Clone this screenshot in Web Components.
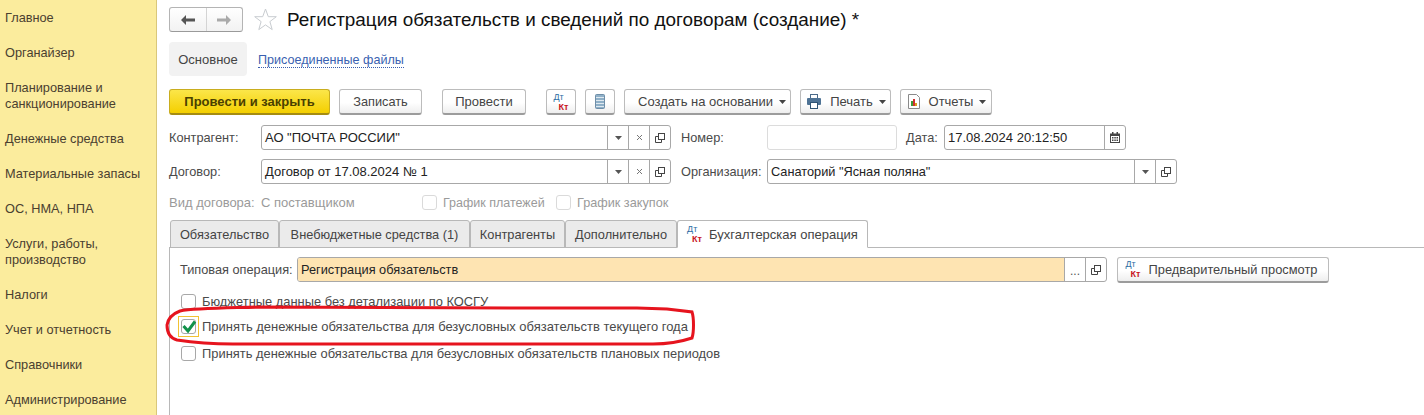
<!DOCTYPE html>
<html lang="ru">
<head>
<meta charset="utf-8">
<title>Регистрация обязательств</title>
<style>
  html, body { margin: 0; height: 415px; overflow: hidden; background: #fff; }
  body { display: flex; font: 13px "Liberation Sans", Arial, sans-serif; color: #333; }
</style>
</head>
<body>
<template id="dtkt">
  <style>
    :host { display: inline-block; position: relative; width: 15px; height: 16px; flex: none; }
    span { position: absolute; font: 9px "Liberation Sans", Arial, sans-serif; }
    .d { left: 0; top: -2px; color: #2d6da3; }
    .k { left: 5px; top: 8px; color: #c8141e; font-weight: bold; }
  </style>
  <span class="d">Дт</span><span class="k">Кт</span>
</template>

<app-sidebar>
  <side-item>Главное</side-item>
  <side-item>Органайзер</side-item>
  <side-item>Планирование и<br>санкционирование</side-item>
  <side-item>Денежные средства</side-item>
  <side-item>Материальные запасы</side-item>
  <side-item>ОС, НМА, НПА</side-item>
  <side-item>Услуги, работы,<br>производство</side-item>
  <side-item>Налоги</side-item>
  <side-item>Учет и отчетность</side-item>
  <side-item>Справочники</side-item>
  <side-item>Администрирование</side-item>
</app-sidebar>

<doc-form>
  <form-header title="Регистрация обязательств и сведений по договорам (создание) *"></form-header>
  <form-links></form-links>

  <form-row style="--top:13px;--h:26px">
    <ui-btn primary style="width:161px;margin-right:9px">Провести и закрыть</ui-btn>
    <ui-btn style="width:83px;margin-right:20px;font-size:12.75px">Записать</ui-btn>
    <ui-btn style="width:84px;margin-right:20px">Провести</ui-btn>
    <ui-btn style="width:30px;margin-right:9px"><dt-kt></dt-kt></ui-btn>
    <ui-btn style="width:30px;margin-right:9px">
      <svg width="10" height="15" viewBox="0 0 10 15"><rect x=".5" y=".5" width="9" height="14" rx="1" fill="#8fb0c8" stroke="#6f8ea8"/><path d="M1 3.500h8M1 6.500h8M1 9.500h8M1 12.500h8" stroke="#dfe9f0"/></svg>
    </ui-btn>
    <ui-btn caret style="width:167px;margin-right:9px;padding-left:9px">Создать на основании</ui-btn>
    <ui-btn caret style="width:91px;margin-right:9px">
      <svg slot="icon" width="14" height="15" viewBox="0 0 14 15"><rect x="3.500" y=".5" width="7" height="4" fill="#fff" stroke="#4a6a8a"/><rect x="0" y="4" width="14" height="7" rx="1" fill="#4f7395"/><rect x="3.500" y="8.500" width="7" height="6" fill="#fff" stroke="#2f5373"/></svg>
      Печать
    </ui-btn>
    <ui-btn caret style="width:92px">
      <svg slot="icon" width="12" height="15" viewBox="0 0 12 15"><path d="M.5.5h8l3 3v11H.5z" fill="#fff" stroke="#8a8a8a"/><rect x="3" y="7" width="2" height="5" fill="#3a9a3a"/><rect x="5" y="5" width="2" height="7" fill="#d03030"/><rect x="7" y="9" width="2" height="3" fill="#d8a020"/></svg>
      Отчеты
    </ui-btn>
  </form-row>

  <form-row style="--top:10px;--h:25px">
    <form-label style="width:92px">Контрагент:</form-label>
    <ui-field style="width:410px;margin-right:10px" buttons="drop clear open">АО "ПОЧТА РОССИИ"</ui-field>
    <form-label style="width:86px">Номер:</form-label>
    <ui-field style="width:130px;margin-right:9px" faint></ui-field>
    <form-label style="width:38px">Дата:</form-label>
    <ui-field style="width:182px" buttons="cal">17.08.2024 20:12:50</ui-field>
  </form-row>

  <form-row style="--top:9px;--h:25px">
    <form-label style="width:92px">Договор:</form-label>
    <ui-field style="width:410px;margin-right:10px" buttons="drop clear open">Договор от 17.08.2024 № 1</ui-field>
    <form-label style="width:86px">Организация:</form-label>
    <ui-field style="width:410px;font-size:12.75px" buttons="drop open">Санаторий "Ясная поляна"</ui-field>
  </form-row>

  <form-row style="--top:9px;--h:19px">
    <form-label muted style="width:92px;font-size:13px">Вид договора:</form-label>
    <form-label muted style="width:161px;font-size:13px">С поставщиком</form-label>
    <ui-check disabled style="width:134px;font-size:12.5px">График платежей</ui-check>
    <ui-check disabled style="font-size:12.7px">График закупок</ui-check>
  </form-row>

  <tab-strip>
    <ui-tab style="width:109px">Обязательство</ui-tab>
    <ui-tab style="width:191px">Внебюджетные средства (1)</ui-tab>
    <ui-tab style="width:95px">Контрагенты</ui-tab>
    <ui-tab style="width:112px">Дополнительно</ui-tab>
    <ui-tab active style="width:191px;font-size:13px;gap:7px"><dt-kt slot="icon"></dt-kt>Бухгалтерская операция</ui-tab>
  </tab-strip>

  <tab-panel>
    <form-row style="--top:0;--h:25px">
      <form-label style="width:117px">Типовая операция:</form-label>
      <ui-field style="width:810px;margin-right:10px;font-size:12.75px" buttons="dots open" tinted>Регистрация обязательств</ui-field>
      <ui-btn style="width:212px;font-size:12.85px;padding-right:3px"><dt-kt slot="icon"></dt-kt>Предварительный просмотр</ui-btn>
    </form-row>
    <ui-check style="margin:11px 0 0 1px;height:16px">Бюджетные данные без детализации по КОСГУ</ui-check>
    <ui-check checked style="margin:9px 0 0 1px;height:16px;font-size:12.97px">Принять денежные обязательства для безусловных обязательств текущего года</ui-check>
    <ui-check style="margin:11px 0 0 1px;height:16px">Принять денежные обязательства для безусловных обязательств плановых периодов</ui-check>
  </tab-panel>

  <svg width="540" height="50" viewBox="160 300 540 50" fill="none" style="position:absolute;left:3px;top:300px;pointer-events:none">
    <path d="M180 311C195 308 230 308 260 307L540 308L637 308L667 309L692 312C694 318 694 332 692 338C680 342 665 344 653 344L460 344L233 344C210 344 190 342 177 340C170 338 167 332 167 325C168 319 172 314 180 311Z" stroke="#e6141e" stroke-width="3"/>
  </svg>
</doc-form>

<script>
const ICONS = {
  drop: '<svg width="7" height="4" viewBox="0 0 7 4"><path d="M0 0h7L3.500 4z" fill="#555"/></svg>',
  clear: '<svg width="7" height="7" viewBox="0 0 7 7"><path d="M1 1l5 5M6 1L1 6" stroke="#777" fill="none"/></svg>',
  open: '<svg width="10" height="10" viewBox="0 0 10 10" fill="none" stroke="#444"><rect x="3.500" y=".5" width="6" height="6"/><path d="M3.500 3.500H.5v6h6V6.500"/></svg>',
  dots: '<span style="font:12px/12px \'Liberation Sans\',sans-serif;color:#555;margin-top:3px">...</span>',
  cal: '<svg width="10" height="11" viewBox="0 0 10 11"><path d="M0 1.500h10V11H0z" fill="#444"/><path d="M1 4h8v6H1z" fill="#fff"/><path d="M2 0h1.500v2.500H2zM6.500 0H8v2.500H6.500z" fill="#444"/><path d="M2 5h1.500v1.500H2zM4.300 5h1.500v1.500H4.300zM6.500 5H8v1.500H6.500zM2 7.500h1.500V9H2zM4.300 7.500h1.500V9H4.300zM6.500 7.500H8V9H6.500z" fill="#444"/></svg>'
};

// every element here is just markup + styles, so one helper is enough
function shadow(host, html) {
  host.attachShadow({ mode: 'open' }).innerHTML = html;
}

class AppSidebar extends HTMLElement {
  constructor() {
    super();
    shadow(this, `<style>
      :host { display: flex; flex-direction: column; flex: none; box-sizing: border-box; width: 157px; height: 415px;
        padding-top: 10px; gap: 19px; background: #fbec9d; border-right: 1px solid #d9c77a; overflow: hidden; }
    </style><slot></slot>`);
  }
}

class SideItem extends HTMLElement {
  constructor() {
    super();
    shadow(this, `<style>
      :host { display: block; padding-left: 5px; font-size: 12.75px; line-height: 16px; color: #4a4030; white-space: nowrap; }
    </style><slot></slot>`);
  }
}

class DocForm extends HTMLElement {
  constructor() {
    super();
    shadow(this, `<style>
      :host { display: flex; flex-direction: column; position: relative; flex: 1; min-width: 0; padding-left: 12px; }
    </style><slot></slot>`);
  }
}

class FormHeader extends HTMLElement {
  constructor() {
    super();
    shadow(this, `<style>
      :host { display: flex; align-items: center; height: 25px; margin-top: 7px; }
      .nav { display: flex; box-sizing: border-box; width: 74px; height: 25px; border: 1px solid #b4b4b4; border-bottom-color: #9a9a9a;
        border-radius: 3px; background: linear-gradient(#fff, #f2f2f2); }
      .nav div { flex: 1; display: flex; align-items: center; justify-content: center; }
      .nav div + div { border-left: 1px solid #d4d4d4; }
      .star { margin: 0 10px 0 11px; }
      h1 { margin: 0; font: 18.9px "Liberation Sans", Arial, sans-serif; color: #111; white-space: nowrap; }
    </style>
    <div class="nav">
      <div><svg width="14" height="10" viewBox="0 0 14 10"><path d="M5 0v3.500h9v3H5V10L0 5z" fill="#555"/></svg></div>
      <div><svg width="14" height="10" viewBox="0 0 14 10"><path d="M9 0v3.500H0v3h9V10l5-5z" fill="#aaa"/></svg></div>
    </div>
    <svg class="star" width="23" height="23" viewBox="0 0 23 23"><path d="M11.500 1l2.800 7.700h8l-6.400 4.900 2.300 8-6.700-4.700-6.700 4.700 2.300-8L.7 8.700h8z" fill="#fff" stroke="#c8ccd0"/></svg>
    <h1>${this.getAttribute('title')}</h1>`);
  }
}

class FormLinks extends HTMLElement {
  constructor() {
    super();
    shadow(this, `<style>
      :host { display: flex; align-items: center; height: 34px; margin-top: 10px; }
      .on { display: flex; align-items: center; justify-content: center; width: 78px; height: 34px; background: #f2f2f2; border-radius: 4px; color: #444; }
      a { margin: 2px 0 0 11px; font-size: 12.6px; color: #3a5fb0; text-decoration: none; border-bottom: 1px dotted #3a5fb0; line-height: 14px; }
    </style><div class="on">Основное</div><a href="#">Присоединенные файлы</a>`);
  }
}

class FormRow extends HTMLElement {
  constructor() {
    super();
    shadow(this, `<style>
      :host { display: flex; align-items: center; flex: none; height: var(--h); margin-top: var(--top); }
    </style><slot></slot>`);
  }
}

class FormLabel extends HTMLElement {
  constructor() {
    super();
    shadow(this, `<style>
      :host { display: block; flex: none; font-size: 12.75px; color: #4a4a4a; white-space: nowrap; }
      :host([muted]) { color: #9a9a9a; }
    </style><slot></slot>`);
  }
}

class UiBtn extends HTMLElement {
  constructor() {
    super();
    const caret = this.hasAttribute('caret')
      ? '<svg class="caret" width="7" height="4" viewBox="0 0 7 4"><path d="M0 0h7L3.500 4z" fill="#444"/></svg>' : '';
    shadow(this, `<style>
      :host { display: flex; align-items: center; justify-content: center; flex: none; box-sizing: border-box; height: 26px;
        border: 1px solid #bcbcbc; border-bottom: 2px solid #9c9c9c; border-radius: 3px; gap: 8px;
        background: linear-gradient(#fff 55%, #eee); color: #444; white-space: nowrap; }
      :host([primary]) { background: linear-gradient(#fbe64a, #f4cf00); border-color: #c9ad1e; border-bottom-color: #a58c12;
        font-weight: bold; color: #4a4000; }
      :host([caret]) { gap: 9px; padding-left: 2px; }
      .caret { margin-left: -3px; }
    </style><slot name="icon"></slot><slot></slot>${caret}`);
  }
}

class UiField extends HTMLElement {
  constructor() {
    super();
    const btns = (this.getAttribute('buttons') || '').split(' ').filter(Boolean)
      .map(b => `<div class="b">${ICONS[b]}</div>`).join('');
    shadow(this, `<style>
      :host { display: flex; flex: none; box-sizing: border-box; height: 25px; border: 1px solid #a8a8a8; border-radius: 3px;
        background: #fff; color: #222; overflow: hidden; }
      :host([faint]) { border-color: #dcdcdc; }
      :host([tinted]) .v { background: #fee4b2; }
      .v { flex: 1; min-width: 0; display: flex; align-items: center; padding-left: 3px; white-space: nowrap; }
      .b { display: flex; align-items: center; justify-content: center; width: 20px; border-left: 1px solid #a8a8a8; }
    </style><div class="v"><slot></slot></div>${btns}`);
  }
}

class UiCheck extends HTMLElement {
  constructor() {
    super();
    const tick = this.hasAttribute('checked')
      ? '<svg width="16" height="13" viewBox="0 0 16 13"><path d="M2.500 6l4.500 5L14 1.500" fill="none" stroke="#12924a" stroke-width="3"/></svg>' : '';
    shadow(this, `<style>
      :host { display: flex; align-items: center; flex: none; gap: 6px; font-size: 12.9px; color: #4a4a4a; white-space: nowrap; }
      :host([disabled]) { color: #9a9a9a; }
      .box { position: relative; display: flex; align-items: center; justify-content: center; box-sizing: border-box; width: 15px; height: 15px;
        border: 1px solid #a8a8a8; border-radius: 3px; background: #fff; }
      .box svg { flex: none; margin-left: 1px; }
      :host([disabled]) .box { border-color: #dadada; }
      :host([checked]) .box::after { content: ""; position: absolute; inset: -4px; border: 1px solid #f2c233; }
    </style><div class="box">${tick}</div><slot></slot>`);
  }
}

class TabStrip extends HTMLElement {
  constructor() {
    super();
    shadow(this, `<style>
      :host { display: flex; flex: none; height: 28px; margin-top: 8px; margin-left: 1px; }
    </style><slot></slot>`);
  }
}

class UiTab extends HTMLElement {
  constructor() {
    super();
    shadow(this, `<style>
      :host { display: flex; align-items: center; justify-content: center; gap: 8px; flex: none; box-sizing: border-box; height: 28px;
        border: 1px solid #b8b8b8; border-radius: 3px 3px 0 0; background: #ebebeb; font-size: 12.8px; color: #444; white-space: nowrap; }
      :host([active]) { background: #fff; border-bottom-color: #fff; position: relative; z-index: 1; }
    </style><slot name="icon"></slot><slot></slot>`);
  }
}

class TabPanel extends HTMLElement {
  constructor() {
    super();
    shadow(this, `<style>
      :host { display: block; flex: 1; box-sizing: border-box; margin-top: -1px; padding: 9px 0 0 10px;
        border-top: 1px solid #b8b8b8; border-left: 1px solid #b8b8b8; }
    </style><slot></slot>`);
  }
}

class DtKt extends HTMLElement {
  constructor() {
    super();
    this.attachShadow({ mode: 'open' }).appendChild(document.getElementById('dtkt').content.cloneNode(true));
  }
}

customElements.define('app-sidebar', AppSidebar);
customElements.define('side-item', SideItem);
customElements.define('doc-form', DocForm);
customElements.define('form-header', FormHeader);
customElements.define('form-links', FormLinks);
customElements.define('form-row', FormRow);
customElements.define('form-label', FormLabel);
customElements.define('ui-btn', UiBtn);
customElements.define('ui-field', UiField);
customElements.define('ui-check', UiCheck);
customElements.define('tab-strip', TabStrip);
customElements.define('ui-tab', UiTab);
customElements.define('tab-panel', TabPanel);
customElements.define('dt-kt', DtKt);
</script>
</body>
</html>
